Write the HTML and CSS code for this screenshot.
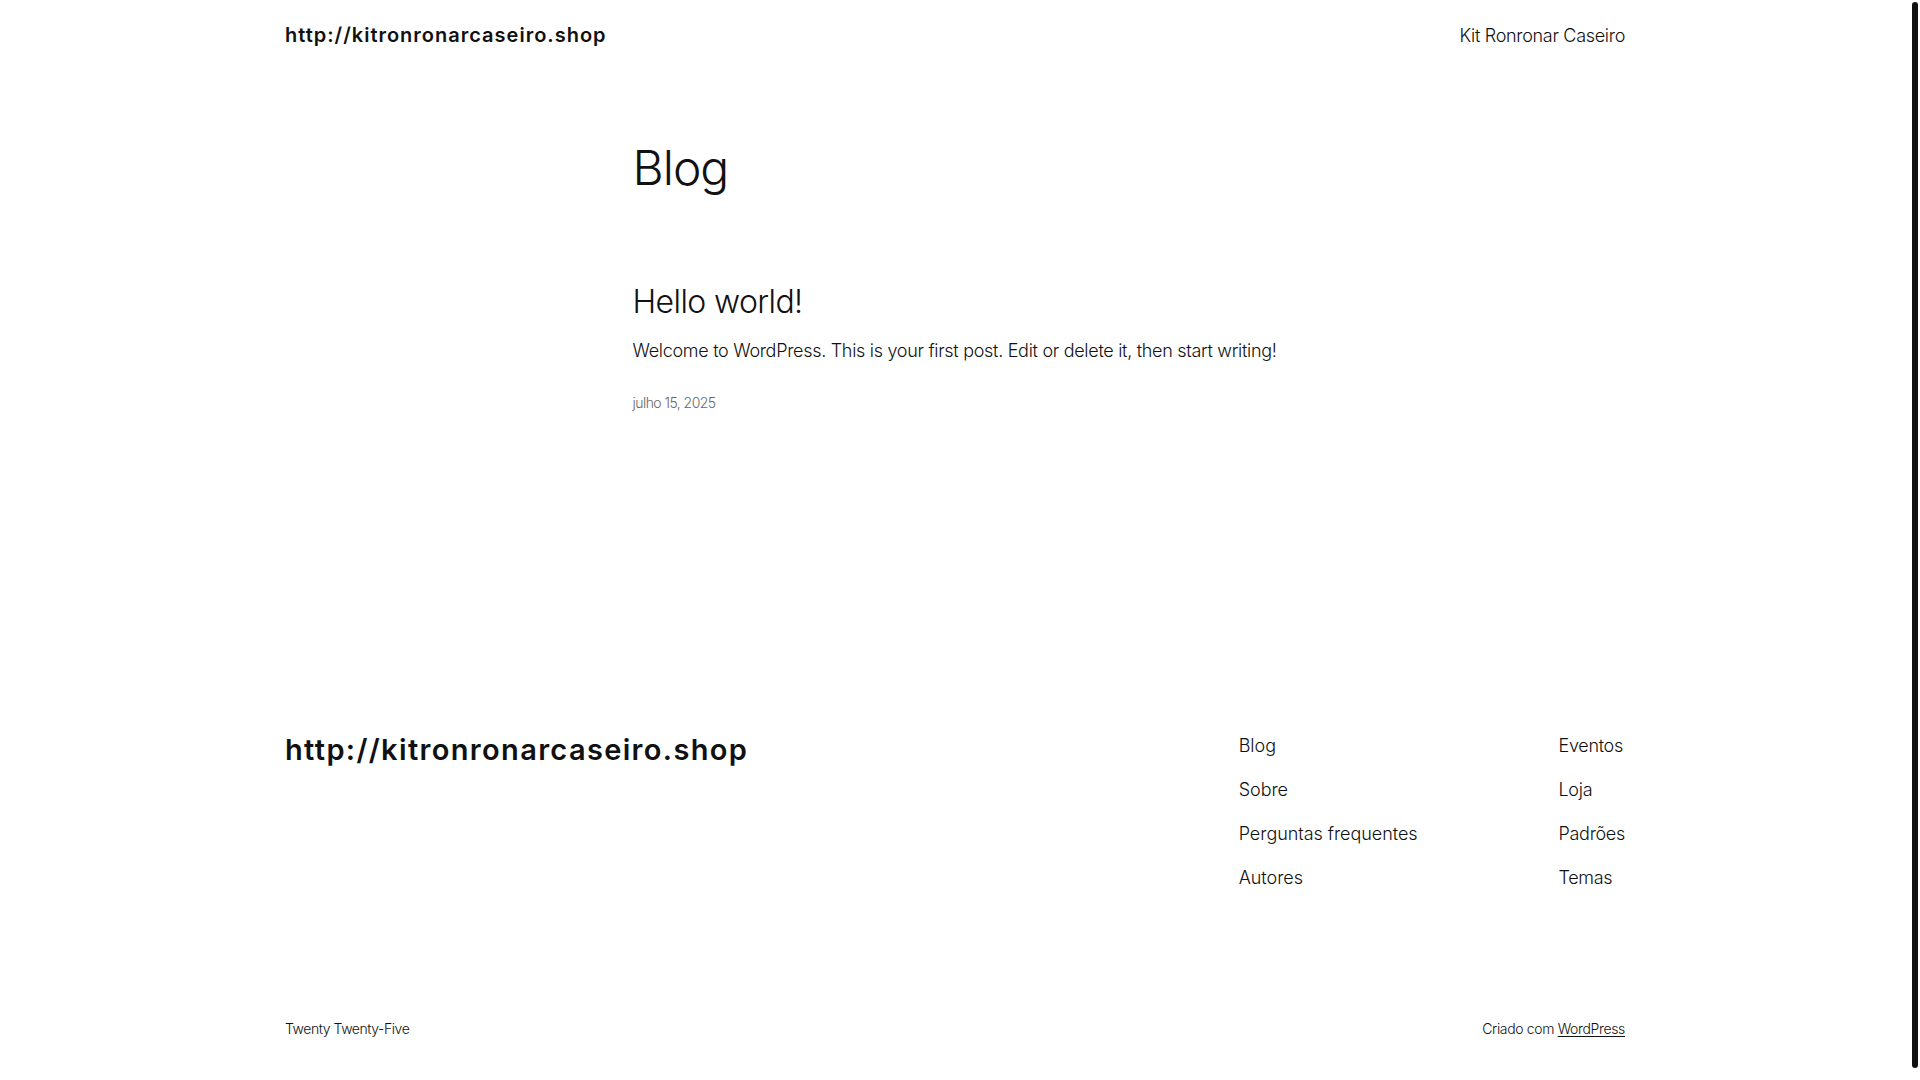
FILE: index.html
```html
<!DOCTYPE html>
<html lang="pt-BR">
<head>
<meta charset="utf-8">
<title>Blog – http://kitronronarcaseiro.shop</title>
<link rel="stylesheet" href="styles.css">
</head>
<body>
<div class="page">
  <header class="site-header">
    <div class="wide header-row">
      <a class="site-title" href="#">http://kitronronarcaseiro.shop</a>
      <nav class="main-nav"><a href="#">Kit Ronronar Caseiro</a></nav>
    </div>
  </header>

  <main class="content">
    <h1 class="page-title">Blog</h1>
    <article class="post">
      <h2 class="post-title"><a href="#">Hello world!</a></h2>
      <p class="excerpt">Welcome to WordPress. This is your first post. Edit or delete it, then start writing!</p>
      <time class="post-date">julho 15, 2025</time>
    </article>
  </main>

  <footer class="site-footer">
    <div class="wide footer-top">
      <a class="footer-title" href="#">http://kitronronarcaseiro.shop</a>
      <div class="footer-navs">
        <ul class="footer-col">
          <li><a href="#">Blog</a></li>
          <li><a href="#">Sobre</a></li>
          <li><a href="#">Perguntas frequentes</a></li>
          <li><a href="#">Autores</a></li>
        </ul>
        <ul class="footer-col">
          <li><a href="#">Eventos</a></li>
          <li><a href="#">Loja</a></li>
          <li><a href="#">Padrões</a></li>
          <li><a href="#">Temas</a></li>
        </ul>
      </div>
    </div>
    <div class="wide footer-bottom">
      <span class="credit-left">Twenty Twenty-Five</span>
      <span class="credit-right">Criado com <a href="#">WordPress</a></span>
    </div>
  </footer>
</div>
<div class="scrollbar" aria-hidden="true"><div class="scrollbar-thumb"></div></div>
</body>
</html>
```

FILE: styles.css
```css
html {
  background: #ffffff;
}
body {
  margin: 0;
  background: #ffffff;
  color: #111111;
  font-family: Inter, "Noto Sans", "Liberation Sans", sans-serif;
  font-weight: 300;
  -webkit-font-smoothing: antialiased;
}
a {
  color: inherit;
  text-decoration: none;
}
.page {
  width: calc(100% - 10px);
  min-height: 1094px;
  display: flex;
  flex-direction: column;
}
.wide {
  width: 1340px;
  margin: 0 auto;
}
.site-header {
  padding: 21px 0 22px;
}
.header-row {
  display: flex;
  justify-content: space-between;
  align-items: baseline;
}
.site-title {
  font-size: 20px;
  line-height: 28px;
  font-weight: 600;
  letter-spacing: 1px;
}
.main-nav {
  font-size: 18px;
  line-height: 28px;
  font-weight: 300;
  letter-spacing: -0.3px;
}
.content {
  width: 645px;
  margin: 0 auto;
  padding-top: 67px;
  flex: 1;
}
.page-title {
  margin: 0;
  font-size: 48px;
  line-height: 57.6px;
  font-weight: 300;
  letter-spacing: -1px;
}
.post {
  padding-top: 86px;
}
.post-title {
  margin: 0;
  font-size: 32px;
  line-height: 38.4px;
  font-weight: 300;
  letter-spacing: -0.6px;
}
.excerpt {
  margin: 15.6px 0 0;
  font-size: 18px;
  line-height: 28.8px;
  font-weight: 300;
  letter-spacing: -0.3px;
}
.post-date {
  display: block;
  margin-top: 28px;
  font-size: 14px;
  line-height: 19.6px;
  color: #686868;
  letter-spacing: -0.55px;
}
.site-footer {
  padding-bottom: 55px;
}
.footer-top {
  display: flex;
  justify-content: space-between;
  align-items: flex-start;
}
.footer-title {
  margin-top: 1px;
  font-size: 29px;
  line-height: 34.8px;
  font-weight: 600;
  letter-spacing: 1.35px;
}
.footer-navs {
  display: flex;
  gap: 141px;
}
.footer-col {
  list-style: none;
  margin: 0;
  padding: 0;
  display: flex;
  flex-direction: column;
  gap: 15.2px;
  font-size: 18px;
  line-height: 28.8px;
  letter-spacing: -0.3px;
}
.footer-col:first-child {
  letter-spacing: -0.05px;
}
.footer-bottom {
  margin-top: 127px;
  display: flex;
  justify-content: space-between;
  font-size: 14px;
  line-height: 19.6px;
  letter-spacing: -0.35px;
}
.credit-left {
  letter-spacing: -0.45px;
}
.credit-right a {
  text-decoration: underline;
  text-underline-offset: 2px;
}
.scrollbar {
  position: fixed;
  top: 0;
  right: 0;
  bottom: 0;
  width: 10px;
  background: #ffffff;
}
.scrollbar-thumb {
  position: absolute;
  top: 2px;
  right: 2px;
  width: 6px;
  height: 1066px;
  border-radius: 3px;
  background: #111111;
}
```
